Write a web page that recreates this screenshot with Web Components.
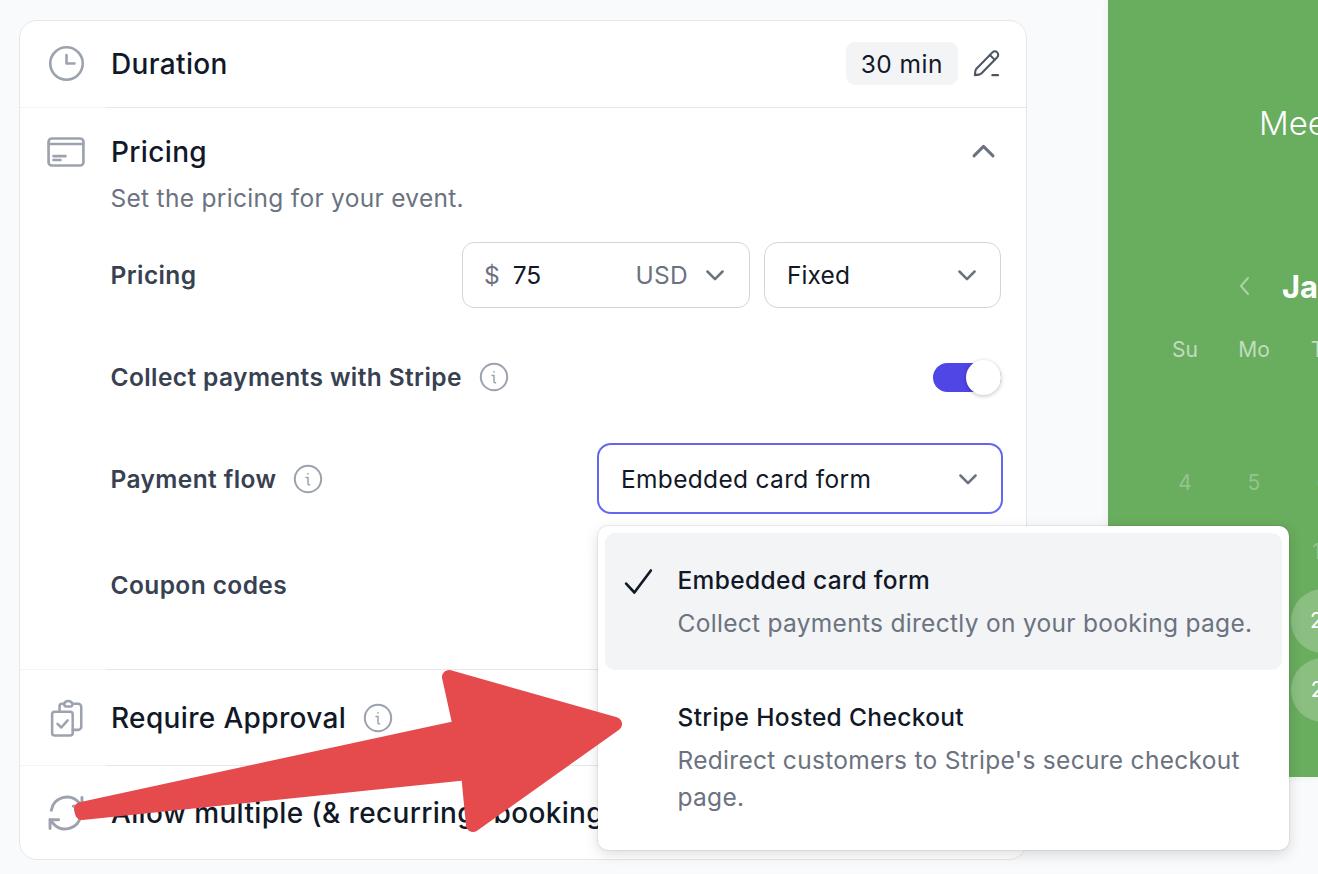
<!DOCTYPE html>
<html>
<head>
<meta charset="utf-8">
<title>Pricing</title>
<style>
  html, body { margin: 0; height: 100%; }
  body { background: #f9fafb; font-family: Inter, "Liberation Sans", sans-serif; overflow: hidden; }
</style>
</head>
<body>
<app-page>
  <event-card>
    <setting-row icon="clock" compact>
      <span slot="title">Duration</span>
      <span slot="aside" style="display:flex;align-items:center"><duration-pill>30 min</duration-pill><line-icon name="pencil" size="31" tone="#4b5563" stroke="1.6" style="margin-right:-1px"></line-icon></span>
    </setting-row>
    <setting-row icon="card" open>
      <span slot="title">Pricing</span>
      <line-icon slot="aside" name="chevron-up" size="35" tone="#6b7280" stroke="2.05" style="margin-top:-2px"></line-icon>
      <span slot="desc">Set the pricing for your event.</span>
      <pricing-form>
        <form-line>
          <span slot="label">Pricing</span>
          <amount-field></amount-field>
          <select-box style="width:237px">Fixed</select-box>
        </form-line>
        <form-line tall>
          <span slot="label">Collect payments with Stripe</span>
          <info-mark slot="label"></info-mark>
          <toggle-switch></toggle-switch>
        </form-line>
        <form-line tall>
          <span slot="label">Payment flow</span>
          <info-mark slot="label"></info-mark>
          <select-box focused style="width:406px;margin:-2px -2px 0 0">Embedded card form
            <pay-menu slot="menu">
              <pay-option selected name="Embedded card form" hint="Collect payments directly on your booking page."></pay-option>
              <pay-option name="Stripe Hosted Checkout" hint="Redirect customers to Stripe's secure checkout page."></pay-option>
            </pay-menu>
          </select-box>
        </form-line>
        <form-line tall style="margin-top:4px">
          <span slot="label">Coupon codes</span>
        </form-line>
      </pricing-form>
    </setting-row>
    <setting-row icon="clipboard">
      <span slot="title">Require Approval</span>
      <info-mark slot="title-extra"></info-mark>
    </setting-row>
    <setting-row icon="refresh" last>
      <span slot="title">Allow multiple (&amp; recurring) bookings</span>
    </setting-row>
  </event-card>
  <calendar-panel></calendar-panel>
  <red-arrow></red-arrow>
</app-page>

<script>
// stroke icons on a 24 box, shared by the elements below
const ICONS = {
  clock: '<circle cx="12" cy="12" r="10"/><path d="M12 6.8V12h4.9"/>',
  pencil: '<path d="M16.6 3.4a2.6 2.6 0 0 1 3.7 3.7L8.2 19.6c-.6.6-1.3.9-2.1 1L3 21l.4-3.1c.1-.8.5-1.5 1-2.1L16.6 3.4z"/><path d="M14.6 5.4l3.8 3.8"/><path d="M16.5 21H21"/>',
  'chevron-up': '<path d="M5.5 15l6.5-6.5 6.5 6.5"/>',
  'chevron-down': '<path d="M5.5 9l6.5 6.5L18.5 9"/>',
  card: '<rect x="1.55" y="3.9" width="20.9" height="16.2" rx="2"/><path d="M1.55 7.2h20.9"/><path d="M4.5 14.5h7.2M4.5 16.8h4.2"/>',
  clipboard: '<rect x="2.6" y="8" width="13" height="15" rx="1.6"/><path d="M7.3 8V4.5A1.5 1.5 0 0 1 8.8 3h1.4c.4-1.2 1.4-1.8 2.6-1.8s2.2.6 2.6 1.8H19a2 2 0 0 1 2 2v12.5a2 2 0 0 1-2 2h-3.4"/><path d="M10.2 3c0 1 .6 1.8 1.4 1.8h2.6c.8 0 1.4-.8 1.2-1.8"/><path d="M6 15.7l2.4 2.3 4-4.5"/>',
  refresh: '<path d="M4 10.5A8.6 8.6 0 0 1 19 6.3l1.7 2"/><path d="M20.7 3.5v4.8H16"/><path d="M20 13.5A8.6 8.6 0 0 1 5 17.7l-1.7-2"/><path d="M3.3 20.5v-4.8H8"/>',
  check: '<path d="M3 13.5l6 6.5L21 4"/>'
};

class LineIcon extends HTMLElement {
  connectedCallback() {
    const size = this.getAttribute('size') || 24;
    const w = this.getAttribute('stroke') || 1.75;
    const root = this.attachShadow({ mode: 'open' });
    root.innerHTML = `
      <style>:host{display:inline-flex;flex:none;color:${this.getAttribute('tone') || '#9ca3af'}}svg{display:block}</style>
      <svg width="${size}" height="${size}" viewBox="0 0 24 24" fill="none" stroke="currentColor" stroke-width="${w}" stroke-linecap="round" stroke-linejoin="round">${ICONS[this.getAttribute('name')]}</svg>`;
  }
}
customElements.define('line-icon', LineIcon);

class InfoMark extends HTMLElement {
  constructor() {
    super();
    this.attachShadow({ mode: 'open' }).innerHTML = `
      <style>:host{display:inline-flex;flex:none;margin-left:17px}svg{display:block}</style>
      <svg width="30" height="30" viewBox="0 0 30 30" fill="none" stroke="#9ca3af">
        <circle cx="15" cy="15" r="13.2" stroke-width="2"/>
        <path d="M13 13.6h2v6.2c0 .7.5 1 1.6.9" stroke="#9ca3af" stroke-width="1.5" stroke-linecap="round"/>
        <circle cx="15" cy="9.8" r=".9" fill="#9ca3af" stroke="none"/>
      </svg>`;
  }
}
customElements.define('info-mark', InfoMark);

class AppPage extends HTMLElement {
  constructor() {
    super();
    this.attachShadow({ mode: 'open' }).innerHTML = `
      <style>
        :host{display:flex;position:relative;align-items:flex-start;height:874px;width:1318px;overflow:hidden;box-sizing:border-box;padding:20px 0 0 19px}
      </style>
      <slot></slot>`;
  }
}
customElements.define('app-page', AppPage);

class EventCard extends HTMLElement {
  constructor() {
    super();
    this.attachShadow({ mode: 'open' }).innerHTML = `
      <style>
        :host{display:block;position:relative;z-index:2;box-sizing:border-box;width:1008px;height:840px;background:#fff;border:1.5px solid #e5e7eb;border-radius:18px;flex:none}
      </style>
      <slot></slot>`;
  }
}
customElements.define('event-card', EventCard);

class SettingRow extends HTMLElement {
  connectedCallback() {
    const open = this.hasAttribute('open');
    const compact = this.hasAttribute('compact');
    const last = this.hasAttribute('last');
    const iconSet = {
      clock: { size: 39, nudge: -1.5 },
      card: { size: 40, nudge: -2 },
      clipboard: { size: 38, nudge: -.5 },
      refresh: { size: 44, nudge: -4.5 }
    };
    const icon = iconSet[this.getAttribute('icon')];
    const headH = open ? 44 : compact ? 85 : last ? 94 : 96;
    const root = this.attachShadow({ mode: 'open' });
    root.innerHTML = `
      <style>
        :host{display:block;position:relative;box-sizing:border-box;height:${compact ? 87 : open ? 562 : last ? 94 : 96}px;padding:${open ? 22 : 0}px 25px 0 28px}
        .rule{position:absolute;left:0;right:0;bottom:0;height:1.5px;background:linear-gradient(90deg,#f3f4f6 0 86px,#e5e7eb 86px);${last ? 'display:none' : ''}}
        .head{display:flex;align-items:center;height:${headH}px}
        .ico{width:63px;flex:none;display:flex}
        .title{font-size:28px;font-weight:500;color:#111827;white-space:nowrap;display:flex;align-items:center;letter-spacing:.35px}
        .aside{margin-left:auto;display:flex;align-items:center}
        .desc{margin:6px 0 0 62.5px;font-size:24.5px;line-height:36px;color:#6b7280;letter-spacing:.3px}
      </style>
      <div class="head">
        <div class="ico"><line-icon name="${this.getAttribute('icon')}" size="${icon.size}" stroke="1.6" style="margin-left:${icon.nudge}px"></line-icon></div>
        <div class="title"><slot name="title"></slot><slot name="title-extra"></slot></div>
        <div class="aside"><slot name="aside"></slot></div>
      </div>
      ${open ? '<div class="desc"><slot name="desc"></slot></div>' : ''}
      <slot></slot>
      <div class="rule"></div>`;
  }
}
customElements.define('setting-row', SettingRow);

class DurationPill extends HTMLElement {
  constructor() {
    super();
    this.attachShadow({ mode: 'open' }).innerHTML = `
      <style>:host{display:inline-flex;align-items:center;height:43px;padding:0 15px;margin-right:13px;background:#f3f4f6;border-radius:9px;font-size:24.5px;color:#111827;letter-spacing:.5px}</style>
      <slot></slot>`;
  }
}
customElements.define('duration-pill', DurationPill);

class PricingForm extends HTMLElement {
  constructor() {
    super();
    this.attachShadow({ mode: 'open' }).innerHTML = `
      <style>:host{display:block;margin:26px 0 0 62.5px}</style>
      <slot></slot>`;
  }
}
customElements.define('pricing-form', PricingForm);

class FormLine extends HTMLElement {
  connectedCallback() {
    this.attachShadow({ mode: 'open' }).innerHTML = `
      <style>
        :host{display:flex;align-items:center;justify-content:space-between;height:${this.hasAttribute('tall') ? 102 : 66}px;margin-bottom:${this.hasAttribute('tall') ? 0 : 18}px}
        .label{display:flex;align-items:center;font-size:24.5px;font-weight:600;color:#374151;white-space:nowrap;letter-spacing:.4px}
        .ctl{display:flex;align-items:center;gap:14px}
      </style>
      <div class="label"><slot name="label"></slot></div>
      <div class="ctl"><slot></slot></div>`;
  }
}
customElements.define('form-line', FormLine);

class AmountField extends HTMLElement {
  constructor() {
    super();
    this.attachShadow({ mode: 'open' }).innerHTML = `
      <style>
        :host{display:flex;align-items:center;box-sizing:border-box;width:288px;height:66px;padding:0 20px 0 21px;border:1.5px solid #d1d5db;border-radius:12px;background:#fff;font-size:24.5px;color:#111827}
        .cur{color:#6b7280;margin-right:13px}
        .code{margin-left:auto;margin-right:13px;color:#6b7280;letter-spacing:.3px}
      </style>
      <span class="cur">$</span><span>75</span><span class="code">USD</span>
      <line-icon name="chevron-down" size="28" tone="#6b7280" stroke="2.2"></line-icon>`;
  }
}
customElements.define('amount-field', AmountField);

class SelectBox extends HTMLElement {
  connectedCallback() {
    const focused = this.hasAttribute('focused');
    this.attachShadow({ mode: 'open' }).innerHTML = `
      <style>
        :host{display:block;position:relative;box-sizing:border-box;height:${focused ? 71 : 66}px}
        .box{display:flex;align-items:center;justify-content:space-between;box-sizing:border-box;height:100%;padding:${focused ? 2 : 0}px 19px 0 22px;border:${focused ? '2.5px solid #6366f1' : '1.5px solid #d1d5db'};border-radius:14px;background:#fff;font-size:24.5px;color:#111827;white-space:nowrap;letter-spacing:${focused ? .32 : .1}px}
      </style>
      <div class="box"><span><slot></slot></span><line-icon name="chevron-down" size="28" tone="#6b7280" stroke="2.2"></line-icon></div>
      <slot name="menu"></slot>`;
  }
}
customElements.define('select-box', SelectBox);

class ToggleSwitch extends HTMLElement {
  constructor() {
    super();
    this.attachShadow({ mode: 'open' }).innerHTML = `
      <style>
        :host{display:block;position:relative;width:68px;height:35px}
        .track{position:absolute;left:0;right:0;top:3px;bottom:3px;border-radius:15px;background:#4f46e5}
        .knob{position:absolute;right:0;top:0;width:35px;height:35px;border-radius:50%;background:#fff;box-shadow:0 1px 4px rgba(0,0,0,.25)}
      </style>
      <div class="track"></div><div class="knob"></div>`;
  }
}
customElements.define('toggle-switch', ToggleSwitch);

class PayMenu extends HTMLElement {
  constructor() {
    super();
    this.attachShadow({ mode: 'open' }).innerHTML = `
      <style>
        :host{display:block;position:absolute;left:1px;top:83px;z-index:5;box-sizing:border-box;width:691px;height:324px;padding:7px;background:#fff;border-radius:10px;box-shadow:0 0 0 1px rgba(0,0,0,.05),0 4px 14px rgba(0,0,0,.14)}
      </style>
      <slot></slot>`;
  }
}
customElements.define('pay-menu', PayMenu);

class PayOption extends HTMLElement {
  connectedCallback() {
    const selected = this.hasAttribute('selected');
    this.attachShadow({ mode: 'open' }).innerHTML = `
      <style>
        :host{display:grid;grid-template-columns:72.5px 1fr;box-sizing:border-box;height:137px;padding:26px 24px 0 0;border-radius:10px;background:${selected ? '#f3f4f6' : 'transparent'}}
        .chk{padding:6px 0 0 17px;box-sizing:border-box;height:40px}
        .name{font-size:24.5px;font-weight:500;line-height:42px;color:#111827;white-space:nowrap;letter-spacing:.35px}
        .hint{font-size:24.5px;line-height:37px;margin-top:4px;color:#6b7280;letter-spacing:.3px}
      </style>
      <div class="chk">${selected ? '<line-icon name="check" size="33" tone="#111827" stroke="1.9"></line-icon>' : ''}</div>
      <div><div class="name">${this.getAttribute('name')}</div><div class="hint">${this.getAttribute('hint')}</div></div>`;
  }
}
customElements.define('pay-option', PayOption);

class CalendarPanel extends HTMLElement {
  constructor() {
    super();
    const days = [['4', '5', '6'], ['', '', '13'], ['', '', '20'], ['', '', '27']];
    const cell = d => {
      const on = d === '20' || d === '27';
      return `<div class="cell"><span class="${on ? 'on' : 'off'}">${d}</span></div>`;
    };
    this.attachShadow({ mode: 'open' }).innerHTML = `
      <style>
        :host{display:block;position:absolute;left:1108px;top:0;width:210px;height:777px;overflow:hidden;background:#69ad5e;color:#fff;font-family:Inter,"Liberation Sans",sans-serif;box-shadow:0 0 8px rgba(0,0,0,.06)}
        .title{position:absolute;left:151px;top:102px;font-size:33px;font-weight:300;line-height:42px;white-space:nowrap}
        .back{position:absolute;left:124px;top:274px}
        .month{position:absolute;left:174px;top:268px;font-size:31px;font-weight:700;line-height:38px;white-space:nowrap}
        .grid{position:absolute;left:42.5px;top:315px;display:grid;grid-template-columns:repeat(3,69px);grid-template-rows:69px 64px repeat(4,69px);justify-items:center;align-items:center}
        .wd{font-size:21px;color:rgba(255,255,255,.6)}
        .cell{display:flex;justify-content:center;align-items:center;width:64px;height:64px;font-size:21px}
        .off{color:rgba(255,255,255,.3)}
        .on{display:flex;align-items:center;justify-content:center;width:64px;height:64px;border-radius:50%;background:rgba(255,255,255,.22);color:#fff}
        .cell span:empty{display:none}
      </style>
      <div class="title">Mee</div>
      <svg class="back" width="24" height="24" viewBox="0 0 24 24" fill="none" stroke="rgba(255,255,255,.45)" stroke-width="2" stroke-linecap="round" stroke-linejoin="round"><path d="M16 4l-7 8 7 8"/></svg>
      <div class="month">Ja</div>
      <div class="grid">
        <div class="wd">Su</div><div class="wd">Mo</div><div class="wd">Tu</div>
        <div></div><div></div><div></div>
        ${days.map(r => r.map(cell).join('')).join('')}
      </div>`;
  }
}
customElements.define('calendar-panel', CalendarPanel);

class RedArrow extends HTMLElement {
  constructor() {
    super();
    this.attachShadow({ mode: 'open' }).innerHTML = `
      <style>:host{display:block;position:absolute;left:0;top:0;z-index:9;pointer-events:none}svg{display:block}</style>
      <svg width="1318" height="874" viewBox="0 0 1318 874">
        <path d="M81 809 L460 727 L449 677 L615 724 L473 825 L468 773 L82 813 Z" fill="#e54a4d" stroke="#e54a4d" stroke-width="14" stroke-linejoin="round"/>
      </svg>`;
  }
}
customElements.define('red-arrow', RedArrow);
</script>
</body>
</html>
